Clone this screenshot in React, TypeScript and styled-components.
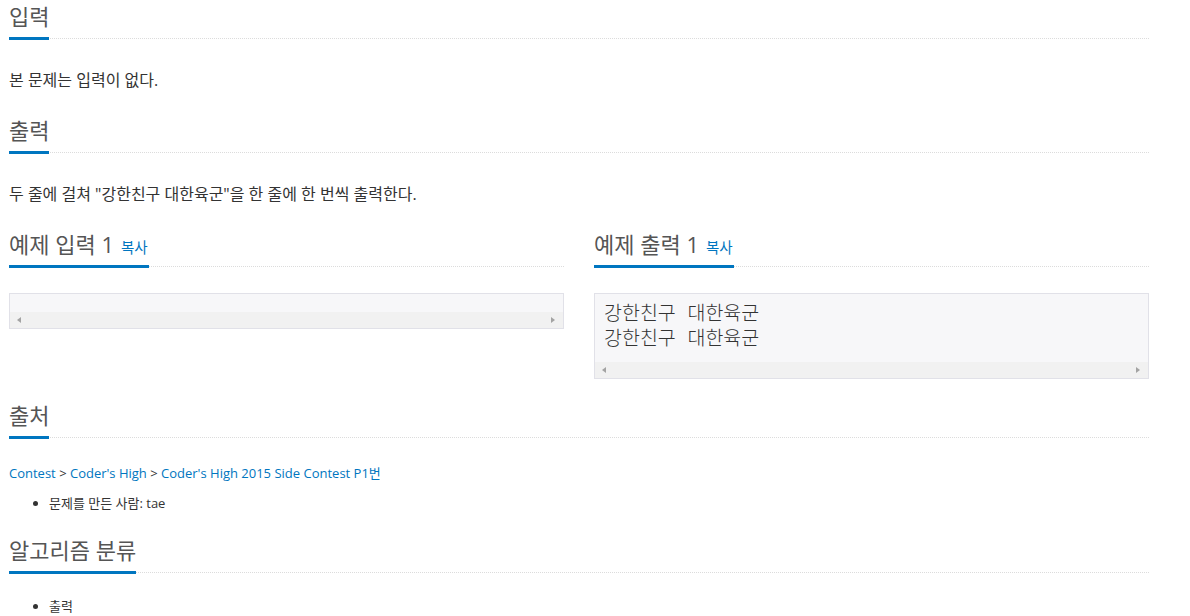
import styled, { createGlobalStyle } from "styled-components";

const GlobalStyle = createGlobalStyle`
  html, body {
    margin: 0;
    padding: 0;
    background: #fff;
  }
  body {
    font-family: "Open Sans", "Noto Sans CJK KR", sans-serif;
    color: #333;
    font-size: 14px;
  }
`;

const Page = styled.div`
  width: 1140px;
  padding: 0 9px;
`;

const Section = styled.section<{ gap?: number }>`
  margin-bottom: ${(p) => p.gap ?? 24}px;
`;

const Headline = styled.div<{ space?: number }>`
  border-bottom: 1px dotted #dcdcdc;
  margin-bottom: ${(p) => p.space ?? 31}px;
  height: 38px;
`;

const Title = styled.h2`
  display: inline-flex;
  align-items: baseline;
  gap: 7px;
  margin: 0;
  height: 31px;
  line-height: 32px;
  padding-bottom: 6px;
  border-bottom: 3px solid #0076c0;
  font-size: 22px;
  font-weight: 400;
  color: #555;
  font-family: "Open Sans", "Noto Sans CJK KR", sans-serif;
`;

const CopyLink = styled.span`
  font-size: 14.5px;
  color: #0076c0;
  margin-right: 1px;
`;

const Para = styled.p`
  margin: 0;
  line-height: 20px;
  font-size: 16px;
  color: #333;
`;

const Columns = styled.div`
  display: grid;
  grid-template-columns: 1fr 1fr;
  column-gap: 30px;
  align-items: start;
`;

const Pre = styled.div`
  border: 1px solid #e1e1e8;
  background: #f7f7f9;
  margin-top: -5px;
`;

const PreText = styled.pre`
  margin: 0;
  padding: 9px 9px 9px 9px;
  font-family: "Liberation Mono", "Noto Sans CJK KR", monospace;
  font-size: 19.5px;
  font-weight: 300;
  line-height: 25px;
  color: #333;
`;

const ScrollBar = styled.div`
  height: 16px;
  background: #f1f1f1;
  display: flex;
  align-items: center;
  justify-content: space-between;
  padding: 0 8px 0 7px;
`;

const Arrow = styled.span<{ dir: "left" | "right" }>`
  width: 0;
  height: 0;
  border-top: 3.5px solid transparent;
  border-bottom: 3.5px solid transparent;
  ${(p) =>
    p.dir === "left"
      ? "border-right: 4px solid #a3a3a3;"
      : "border-left: 4px solid #a3a3a3;"}
`;

const Crumbs = styled.div`
  font-size: 13px;
  line-height: 20px;
  color: #333;
  margin-top: -6px;
`;

const Link = styled.a`
  color: #0076c0;
  text-decoration: none;
`;

const List = styled.ul`
  margin: 10px 0 0;
  padding-left: 40px;
  font-size: 13px;
  line-height: 20px;
  color: #333;
`;

function Sample({ title, lines }: { title: string; lines: string[] }) {
  return (
    <div>
      <Headline>
        <Title>
          <span>{title}</span>
          <CopyLink>복사</CopyLink>
        </Title>
      </Headline>
      <Pre>
        <PreText>{lines.join("\n")}</PreText>
        <ScrollBar>
          <Arrow dir="left" />
          <Arrow dir="right" />
        </ScrollBar>
      </Pre>
    </div>
  );
}

export default function App() {
  return (
    <>
      <GlobalStyle />
      <Page>
        <Section>
          <Headline>
            <Title>입력</Title>
          </Headline>
          <Para>본 문제는 입력이 없다.</Para>
        </Section>

        <Section>
          <Headline>
            <Title>출력</Title>
          </Headline>
          <Para>두 줄에 걸쳐 "강한친구 대한육군"을 한 줄에 한 번씩 출력한다.</Para>
        </Section>

        <Section gap={20}>
          <Columns>
            <Sample title="예제 입력 1" lines={[]} />
            <Sample title="예제 출력 1" lines={["강한친구 대한육군", "강한친구 대한육군"]} />
          </Columns>
        </Section>

        <Section gap={21}>
          <Headline>
            <Title>출처</Title>
          </Headline>
          <Crumbs>
            <Link>Contest</Link> &gt; <Link>Coder's High</Link> &gt;{" "}
            <Link>Coder's High 2015 Side Contest P1번</Link>
          </Crumbs>
          <List>
            <li>문제를 만든 사람: tae</li>
          </List>
        </Section>

        <Section>
          <Headline space={23}>
            <Title>알고리즘 분류</Title>
          </Headline>
          <List>
            <li>출력</li>
          </List>
        </Section>
      </Page>
    </>
  );
}
